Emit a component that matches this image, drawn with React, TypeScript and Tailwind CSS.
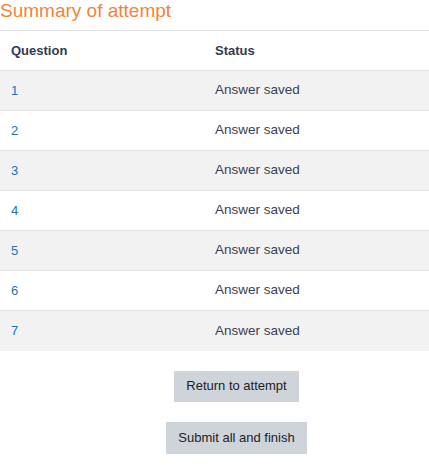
const rows = [1, 2, 3, 4, 5, 6, 7];

export default function App() {
  return (
    <div className="w-[429px] bg-white font-['Liberation_Sans',Arial,sans-serif]">
      <h3 className="h-[30px] text-[19px] leading-[22px] text-[#f0843c]">
        Summary of attempt
      </h3>
      <table className="w-full border-collapse text-[13px]">
        <thead>
          <tr className="h-10 border-t border-[#dee2e6]">
            <th className="w-[203px] px-[11px] text-left font-bold text-[#343a52]">
              Question
            </th>
            <th className="px-3 text-left font-bold text-[#343a52]">Status</th>
          </tr>
        </thead>
        <tbody>
          {rows.map((n) => (
            <tr
              key={n}
              className={
                "h-10 border-t border-[#dee2e6] " +
                (n % 2 === 1 ? "bg-[#f2f2f2]" : "bg-white")
              }
            >
              <td className="px-[11px] text-[#1f6fc0]">{n}</td>
              <td className="px-3 text-[13.5px] text-[#3c3f52]">Answer saved</td>
            </tr>
          ))}
        </tbody>
      </table>
      <div className="flex flex-col items-center gap-5 pt-5 pb-3 pl-[44px]">
        <button className="h-[31px] bg-[#ced4da] px-3 text-[13px] text-[#1d2125]">
          Return to attempt
        </button>
        <button className="h-8 bg-[#ced4da] px-3 text-[13px] text-[#1d2125]">
          Submit all and finish
        </button>
      </div>
    </div>
  );
}
